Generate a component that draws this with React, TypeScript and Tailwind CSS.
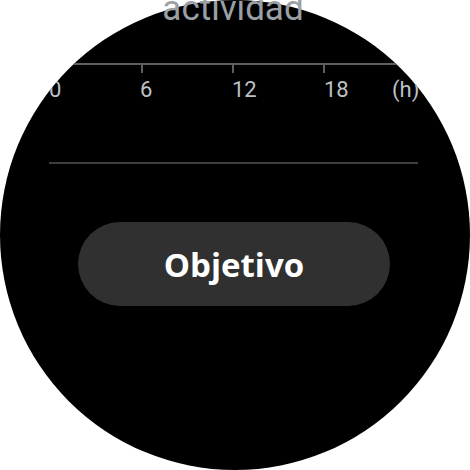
export default function App() {
  const ticks = [0, 6, 12, 18]

  return (
    <div className="relative w-[470px] h-[470px] bg-white overflow-hidden">
      {/* Watch face */}
      <div className="w-[470px] h-[470px] rounded-full bg-black overflow-hidden flex flex-col font-['Roboto',sans-serif]">
        <div className="h-[63px] shrink-0" />

        {/* Hour axis */}
        <div className="h-[2px] w-full bg-[#5f5f5f] shrink-0" />
        <div className="flex ml-[50px] shrink-0">
          {ticks.map((t) => (
            <div key={t} className="w-[91px] h-[8px]">
              <div className="w-[2px] h-full bg-[#5f5f5f]" />
            </div>
          ))}
          <div className="w-[2px] h-[8px] bg-[#5f5f5f]" />
        </div>
        <div className="flex ml-[49px] mt-[6px] h-[22px] text-[22px] leading-[22px] text-[#bdc1c6] shrink-0">
          <span className="w-[91px]">0</span>
          <span className="w-[92px]">6</span>
          <span className="w-[92px]">12</span>
          <span className="w-[68px]">18</span>
          <span>(h)</span>
        </div>

        {/* Divider */}
        <div className="ml-[49px] mt-[61px] w-[369px] h-[2px] bg-[#3d3d3d] shrink-0" />

        {/* Goal button */}
        <button className="ml-[78px] mt-[58px] w-[312px] h-[84px] rounded-full bg-[#303030] flex items-center justify-center shrink-0">
          <span className="font-['Open_Sans',sans-serif] font-bold text-[33px] leading-none text-white">
            Objetivo
          </span>
        </button>
      </div>

      {/* Scrolled title, overlapping the top edge */}
      <div className="absolute left-0 right-[4px] top-[-9px] text-center text-[35px] leading-[35px] text-[#9aa0a6] font-['Roboto',sans-serif]">
        actividad
      </div>
    </div>
  )
}
